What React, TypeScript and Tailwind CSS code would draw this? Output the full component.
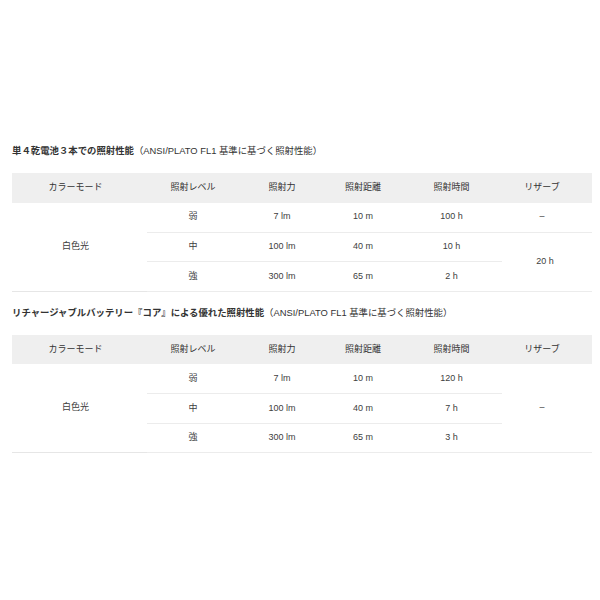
import React from "react";

const font = { fontFamily: '"Liberation Sans", "Noto Sans CJK JP", sans-serif' };

type Row = { level: string; lm: string; dist: string; time: string };

function Table({ rows, reserve }: { rows: Row[]; reserve: "t1" | "t2" }) {
  const td = "h-[29.5px] p-0 text-center align-middle";
  return (
    <table className="w-[580px] table-fixed border-collapse text-[9px] text-[#404040]">
      <colgroup>
        <col className="w-[135px]" />
        <col className="w-[92px]" />
        <col className="w-[86px]" />
        <col className="w-[76px]" />
        <col className="w-[101px]" />
        <col className="w-[90px]" />
      </colgroup>
      <thead>
        <tr className="bg-[#efefef] text-[#333]">
          <th className={`${td} pr-2 font-normal`}>カラーモード</th>
          <th className={`${td} font-normal`}>照射レベル</th>
          <th className={`${td} font-normal`}>照射力</th>
          <th className={`${td} font-normal`}>照射距離</th>
          <th className={`${td} font-normal`}>照射時間</th>
          <th className={`${td} pr-[10px] font-normal`}>リザーブ</th>
        </tr>
      </thead>
      <tbody>
        {rows.map((r, i) => (
          <tr key={i}>
            {i === 0 && (
              <td rowSpan={3} className={`${td} pr-2 border-b border-[#e6e6e6]`}>
                白色光
              </td>
            )}
            <td className={`${td} border-b border-[#ececec]`}>{r.level}</td>
            <td className={`${td} border-b border-[#ececec]`}>{r.lm}</td>
            <td className={`${td} border-b border-[#ececec]`}>{r.dist}</td>
            <td className={`${td} border-b border-[#ececec]`}>{r.time}</td>
            {reserve === "t1" && i === 0 && (
              <td className={`${td} pr-[10px] border-b border-[#ececec]`}>–</td>
            )}
            {reserve === "t1" && i === 1 && (
              <td rowSpan={2} className={`${td} pr-[4px] border-b border-[#ececec]`}>
                20 h
              </td>
            )}
            {reserve === "t2" && i === 0 && (
              <td rowSpan={3} className={`${td} pr-[10px] border-b border-[#ececec]`}>
                –
              </td>
            )}
          </tr>
        ))}
      </tbody>
    </table>
  );
}

export default function App() {
  const rows1: Row[] = [
    { level: "弱", lm: "7 lm", dist: "10 m", time: "100 h" },
    { level: "中", lm: "100 lm", dist: "40 m", time: "10 h" },
    { level: "強", lm: "300 lm", dist: "65 m", time: "2 h" },
  ];
  const rows2: Row[] = [
    { level: "弱", lm: "7 lm", dist: "10 m", time: "120 h" },
    { level: "中", lm: "100 lm", dist: "40 m", time: "7 h" },
    { level: "強", lm: "300 lm", dist: "65 m", time: "3 h" },
  ];
  return (
    <div style={font} className="h-[600px] w-[600px] bg-white pl-[12px] pt-[145px] text-[#333]">
      <div className="h-[12px] text-[9.4px] leading-[12px]">
        <span className="font-bold">単４乾電池３本での照射性能</span>
        <span>（ANSI/PLATO FL1 基準に基づく照射性能）</span>
      </div>
      <div className="mt-[16px]">
        <Table rows={rows1} reserve="t1" />
      </div>
      <div className="mt-[15px] h-[12px] text-[9.4px] leading-[12px]">
        <span className="font-bold">リチャージャブルバッテリー『コア』による優れた照射性能</span>
        <span>（ANSI/PLATO FL1 基準に基づく照射性能）</span>
      </div>
      <div className="mt-[16px]">
        <Table rows={rows2} reserve="t2" />
      </div>
    </div>
  );
}
